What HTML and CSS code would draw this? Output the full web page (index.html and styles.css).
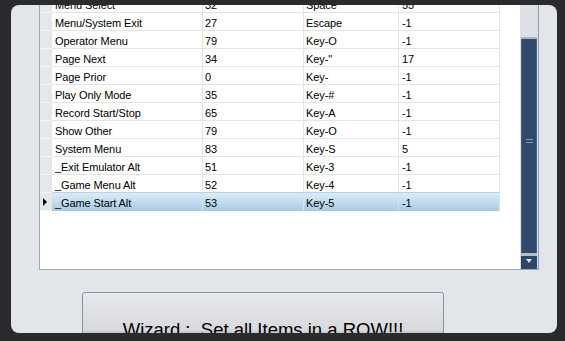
FILE: index.html
```html
<!DOCTYPE html>
<html lang="en">
<head>
  <meta charset="UTF-8">
  <title>Key Mapping</title>
  <link rel="stylesheet" href="styles.css">
</head>
<body>
  <div class="panel">
    <div class="grid">
      <div class="rows">
        <div class="row"><div class="hdr"></div><div class="cell c1">Menu Select</div><div class="cell c2">32</div><div class="cell c3">Space</div><div class="cell c4">55</div></div>
        <div class="row"><div class="hdr"></div><div class="cell c1">Menu/System Exit</div><div class="cell c2">27</div><div class="cell c3">Escape</div><div class="cell c4">-1</div></div>
        <div class="row"><div class="hdr"></div><div class="cell c1">Operator Menu</div><div class="cell c2">79</div><div class="cell c3">Key-O</div><div class="cell c4">-1</div></div>
        <div class="row"><div class="hdr"></div><div class="cell c1">Page Next</div><div class="cell c2">34</div><div class="cell c3">Key-"</div><div class="cell c4">17</div></div>
        <div class="row"><div class="hdr"></div><div class="cell c1">Page Prior</div><div class="cell c2">0</div><div class="cell c3">Key-</div><div class="cell c4">-1</div></div>
        <div class="row"><div class="hdr"></div><div class="cell c1">Play Only Mode</div><div class="cell c2">35</div><div class="cell c3">Key-#</div><div class="cell c4">-1</div></div>
        <div class="row"><div class="hdr"></div><div class="cell c1">Record Start/Stop</div><div class="cell c2">65</div><div class="cell c3">Key-A</div><div class="cell c4">-1</div></div>
        <div class="row"><div class="hdr"></div><div class="cell c1">Show Other</div><div class="cell c2">79</div><div class="cell c3">Key-O</div><div class="cell c4">-1</div></div>
        <div class="row"><div class="hdr"></div><div class="cell c1">System Menu</div><div class="cell c2">83</div><div class="cell c3">Key-S</div><div class="cell c4">5</div></div>
        <div class="row"><div class="hdr"></div><div class="cell c1">_Exit Emulator Alt</div><div class="cell c2">51</div><div class="cell c3">Key-3</div><div class="cell c4">-1</div></div>
        <div class="row"><div class="hdr"></div><div class="cell c1">_Game Menu Alt</div><div class="cell c2">52</div><div class="cell c3">Key-4</div><div class="cell c4">-1</div></div>
        <div class="row selected"><div class="hdr"><span class="arrow"></span></div><div class="cell c1">_Game Start Alt</div><div class="cell c2">53</div><div class="cell c3">Key-5</div><div class="cell c4">-1</div></div>
      </div>
      <div class="vscroll">
        <div class="track"></div>
        <div class="thumb"><span class="grip"></span></div>
        <div class="down-btn"><span class="down-arrow"></span></div>
      </div>
    </div>
    <div class="wizard">Wizard :&nbsp; Set all Items in a ROW!!!</div>
  </div>
</body>
</html>
```

FILE: styles.css
```css
body {
  margin: 0;
  height: 341px;
  overflow: hidden;
  background-color: #2b2b2e;
  padding: 5px 8px 0 11px;
  box-sizing: border-box;
  font-family: "Liberation Sans", Arial, sans-serif;
}

.panel {
  background-color: #e2e5e9;
  height: 328px;
  border-radius: 8px;
  overflow: hidden;
  padding: 0 18px 0 28px;
  display: flex;
  flex-direction: column;
}

/* data grid */
.grid {
  display: flex;
  height: 265px;
  flex-shrink: 0;
  background-color: #ffffff;
  border-left: 1px solid #9ca7b8;
  border-bottom: 1px solid #9ca7b8;
  border-right: 1px solid #8e9bb0;
  box-sizing: border-box;
  overflow: hidden;
}

.rows {
  flex: 1;
  margin-top: -10px;
}

.row {
  display: flex;
  height: 18px;
  font-size: 11px;
  letter-spacing: -0.1px;
  color: #000;
}

.hdr {
  width: 12px;
  flex-shrink: 0;
  background-color: #e6e7e9;
  border-bottom: 1px solid #f5f5f6;
  box-sizing: border-box;
  display: flex;
  align-items: center;
  padding-left: 3px;
}

.cell {
  box-sizing: border-box;
  border-right: 1px solid #e1e4e9;
  border-bottom: 1px solid #e1e4e9;
  padding: 3px 0 0 2px;
  line-height: 14px;
  white-space: nowrap;
  overflow: hidden;
}

.c1 { width: 151px; padding-left: 3px; }
.c2 { width: 101px; }
.c3 { width: 95px; }
.c4 { width: 101px; padding-left: 3px; }

.selected .cell {
  background: linear-gradient(#dcebf6, #c7dfef 45%, #b3d3ea 80%, #a9cde6);
  border-bottom-color: #a8c9e2;
  border-right-color: #d2e3f0;
  box-shadow: 0 -1px 0 #b5d3e9;
}

.arrow {
  width: 0;
  height: 0;
  border-left: 4px solid #000;
  border-top: 4px solid transparent;
  border-bottom: 4px solid transparent;
}

/* vertical scrollbar */
.vscroll {
  width: 18px;
  flex-shrink: 0;
  background-color: #dde1e6;
  display: flex;
  flex-direction: column;
  padding: 0 1px 0 1px;
  box-sizing: border-box;
}

.track {
  height: 32px;
}

.thumb {
  flex: 1;
  background-color: #2f4a6d;
  border-top: 2px solid #a7b2c2;
  box-shadow: inset 1px 0 #41608a, inset -1px 0 #41608a;
  display: flex;
  align-items: center;
  justify-content: center;
}

.grip {
  width: 7px;
  height: 4px;
  border-top: 1px solid #8396b2;
  border-bottom: 1px solid #8396b2;
  box-sizing: border-box;
  margin-top: -10px;
}

.down-btn {
  height: 16px;
  background-color: #2c4769;
  border-top: 3px solid #b6becb;
  box-sizing: border-box;
  display: flex;
  justify-content: center;
  padding-top: 3px;
}

.down-arrow {
  width: 0;
  height: 0;
  border-top: 4px solid #dfe5ee;
  border-left: 3px solid transparent;
  border-right: 3px solid transparent;
}

/* wizard button */
.wizard {
  flex-shrink: 0;
  margin: 22px 0 0 43px;
  width: 362px;
  height: 78px;
  box-sizing: border-box;
  border: 1px solid #8591a6;
  border-radius: 3px;
  background: linear-gradient(#e6e8eb, #d7d9dd 50%, #c8cbd0 50%, #c2c5cb);
  box-shadow: inset 0 1px #f2f3f5;
  font-size: 18.5px;
  line-height: 22px;
  text-align: center;
  padding-top: 26px;
  color: #000;
  white-space: nowrap;
}
```
